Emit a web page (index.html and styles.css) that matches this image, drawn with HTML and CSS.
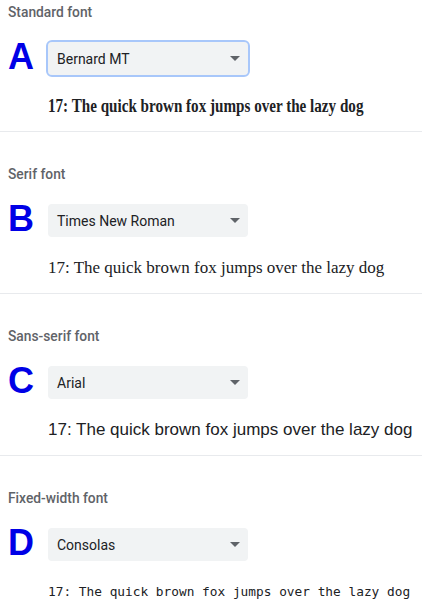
FILE: index.html
```html
<!DOCTYPE html>
<html>
<head>
<meta charset="utf-8">
<link rel="stylesheet" href="styles.css">
</head>
<body>
<section class="sec first">
  <div class="label">Standard font</div>
  <div class="row">
    <div class="letter">A</div>
    <div class="select focused"><span>Bernard MT</span><svg class="arrow" width="10" height="5" viewBox="0 0 10 5"><path d="M0 0h10L5 5z"/></svg></div>
  </div>
  <div class="sample"><span class="bernard">17: The quick brown fox jumps over the lazy dog</span></div>
</section>
<section class="sec">
  <div class="label">Serif font</div>
  <div class="row">
    <div class="letter">B</div>
    <div class="select"><span>Times New Roman</span><svg class="arrow" width="10" height="5" viewBox="0 0 10 5"><path d="M0 0h10L5 5z"/></svg></div>
  </div>
  <div class="sample serif">17: The quick brown fox jumps over the lazy dog</div>
</section>
<section class="sec">
  <div class="label">Sans-serif font</div>
  <div class="row">
    <div class="letter">C</div>
    <div class="select"><span>Arial</span><svg class="arrow" width="10" height="5" viewBox="0 0 10 5"><path d="M0 0h10L5 5z"/></svg></div>
  </div>
  <div class="sample sans">17: The quick brown fox jumps over the lazy dog</div>
</section>
<section class="sec">
  <div class="label">Fixed-width font</div>
  <div class="row">
    <div class="letter">D</div>
    <div class="select"><span>Consolas</span><svg class="arrow" width="10" height="5" viewBox="0 0 10 5"><path d="M0 0h10L5 5z"/></svg></div>
  </div>
  <div class="sample mono">17: The quick brown fox jumps over the lazy dog</div>
</section>
</body>
</html>
```
FILE: styles.css
```css
html, body {
  margin: 0;
  padding: 0;
  background: #ffffff;
  font-family: Roboto, "Liberation Sans", sans-serif;
  color: #202124;
}
body {
  width: 422px;
  height: 613px;
  overflow: hidden;
}
.sec {
  padding: 32px 0 13px 8px;
  border-bottom: 1px solid #e8eaed;
}
.sec.first {
  padding-top: 2px;
}
.label {
  font-size: 13.8px;
  line-height: 20px;
  font-weight: 500;
  color: #5f6368;
}
.row {
  display: flex;
  align-items: center;
  margin-top: 20px;
  height: 33px;
}
.letter {
  width: 40px;
  font-family: "Liberation Sans", Arial, sans-serif;
  font-weight: bold;
  font-size: 36px;
  line-height: 1;
  color: #0000e6;
  margin-top: -3px;
}
.select {
  width: 200px;
  height: 33px;
  box-sizing: border-box;
  background: #f1f3f4;
  border-radius: 4px;
  display: flex;
  align-items: center;
  justify-content: space-between;
  padding: 0 8px 0 9px;
  font-size: 14px;
  color: #202124;
}
.select.focused {
  outline: 2px solid #a8c7fa;
  outline-offset: 0;
}
.arrow {
  fill: #5f6368;
}
.sample {
  margin-top: 19px;
  height: 24px;
  line-height: 24px;
  padding-left: 40px;
  white-space: nowrap;
  color: #202124;
}
.bernard {
  display: inline-block;
  font-family: "Liberation Serif", serif;
  font-weight: bold;
  font-size: 18px;
  transform: scaleX(0.84);
  transform-origin: left center;
}
.serif {
  font-family: "Liberation Serif", "Times New Roman", serif;
  font-size: 17px;
}
.sans {
  font-family: "Liberation Sans", Arial, sans-serif;
  font-size: 17px;
}
.mono {
  font-family: "DejaVu Sans Mono", "Liberation Mono", monospace;
  font-size: 12.8px;
}
```
